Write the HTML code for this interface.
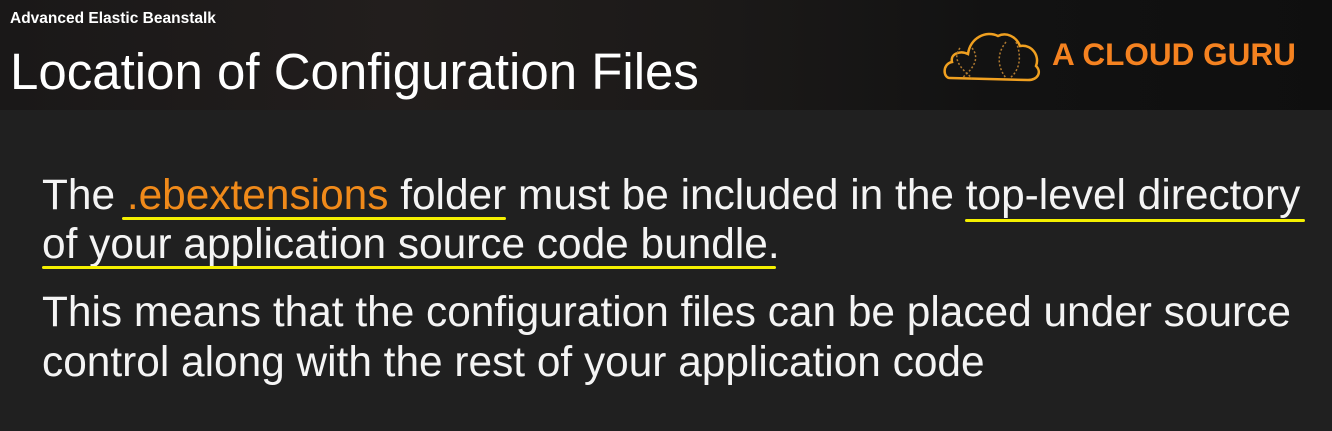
<!DOCTYPE html>
<html><head><meta charset="utf-8"><style>
body{margin:0;width:1332px;height:431px;background:#202020;font-family:"Liberation Sans",sans-serif;overflow:hidden;position:relative}
.hdr{position:absolute;left:0;top:0;width:1332px;height:110px;background:linear-gradient(90deg,#1a1818 0%,#221e1d 30%,#1b1918 55%,#121212 75%,#0f0f0f 100%)}
.t{position:absolute;white-space:nowrap;color:#fff}
.l{font-size:42.4px;color:#f4f4f4}
.u{position:absolute;height:3px;background:#f5f000;border-radius:2px}
</style></head><body>
<div class="hdr"></div>
<div class="t" style="left:10px;top:10px;font-size:15.5px;font-weight:bold">Advanced Elastic Beanstalk</div>
<div class="t" style="left:10px;top:42px;font-size:51px">Location of Configuration Files</div>
<svg style="position:absolute;left:942px;top:26px" width="100" height="56" viewBox="0 0 100 56">
<path d="M8 52 C1 52 0 38 10 36 C8 28 18 24 26 28 C28 12 44 4 56 10 C64 6 74 10 78 20 C90 18 98 30 94 40 C100 46 96 54 86 54 Z" fill="none" stroke="#f0a020" stroke-width="2.5"/>
<path d="M18 22 C10 32 18 42 30 52 M30 22 C38 32 32 42 20 52 M64 16 C54 28 56 42 64 52 M74 16 C80 30 78 44 68 52" fill="none" stroke="#b07a30" stroke-width="1.5" stroke-dasharray="2 2"/>
</svg>
<div class="t" style="left:1052px;top:36px;font-size:31.5px;font-weight:bold;color:#f58220">A CLOUD GURU</div>
<div class="t l" style="left:42px;top:171px">The <span style="color:#f08a1a">.ebextensions</span> folder must be included in the top-level directory</div>
<div class="t l" style="left:42px;top:220px">of your application source code bundle.</div>
<div class="t l" style="left:42px;top:288px">This means that the configuration files can be placed under source</div>
<div class="t l" style="left:42px;top:338px">control along with the rest of your application code</div>
<div class="u" style="left:122px;top:217px;width:384px"></div>
<div class="u" style="left:965px;top:219px;width:340px"></div>
<div class="u" style="left:42px;top:266px;width:734px"></div>
</body></html>
